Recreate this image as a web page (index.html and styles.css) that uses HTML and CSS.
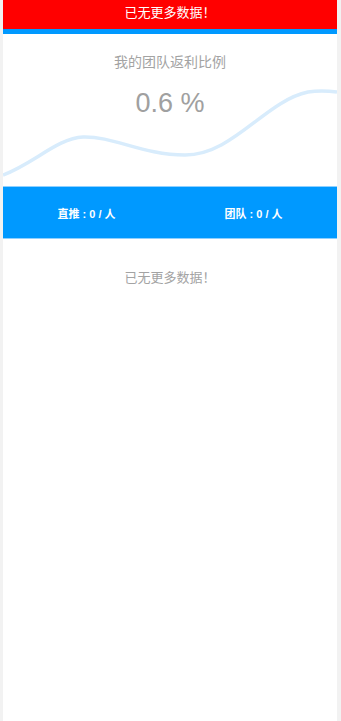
FILE: index.html
```html
<!DOCTYPE html>
<html lang="zh-CN">

<head>
  <meta charset="UTF-8">
  <meta name="viewport" content="width=device-width, initial-scale=1.0">
  <title>我的团队</title>
  <link rel="stylesheet" href="styles.css">
</head>

<body>
  <div class="page">
    <div class="toast">已无更多数据！</div>
    <div class="strip"></div>

    <!-- rate card -->
    <div class="rate">
      <svg class="wave" viewBox="0 0 334 152" preserveAspectRatio="none">
        <path d="M0 141 C30 130, 55 104, 80 103 C110 102, 140 121, 182 121 C230 121, 262 67, 305 58 C318 56, 326 57, 334 58"
          fill="none" stroke="#d8ecfc" stroke-width="3.5" />
      </svg>
      <div class="rate-label">我的团队返利比例</div>
      <div class="rate-value">0.6 %</div>
    </div>

    <div class="stats">
      <div class="stat">直推 : 0 / 人</div>
      <div class="stat">团队 : 0 / 人</div>
    </div>

    <div class="empty">已无更多数据！</div>
  </div>
</body>

</html>
```

FILE: styles.css
```css
body,
html {
  margin: 0;
  padding: 0;
  height: 100%;
  background-color: #f2f2f2;
  font-family: "Liberation Sans", "Noto Sans CJK SC", sans-serif;
}

.page {
  margin: 0 4px 0 3px;
  min-height: 100%;
  background-color: #fff;
}

.toast {
  height: 29px;
  line-height: 26px;
  background-color: #ff0000;
  color: #fff;
  font-size: 13px;
  text-align: center;
}

.strip {
  height: 5px;
  background-color: #0099ff;
}

.rate {
  position: relative;
  height: 152px;
  overflow: hidden;
  text-align: center;
}

.wave {
  position: absolute;
  left: 0;
  top: 0;
  width: 100%;
  height: 100%;
}

.rate-label {
  position: relative;
  padding-top: 19px;
  font-size: 14px;
  line-height: 18px;
  color: #a3a3a3;
}

.rate-value {
  position: relative;
  margin-top: 17px;
  font-size: 27px;
  line-height: 30px;
  color: #a0a0a0;
}

.stats {
  display: flex;
  height: 51px;
  align-items: center;
  background-color: #0099ff;
  border-top: 1px solid #8fd0ff;
  border-bottom: 1px solid #8fd0ff;
}

.stat {
  flex: 1;
  text-align: center;
  color: #fff;
  font-size: 11px;
  font-weight: bold;
}

.empty {
  padding-top: 28px;
  text-align: center;
  font-size: 13px;
  color: #a3a3a3;
}
```
